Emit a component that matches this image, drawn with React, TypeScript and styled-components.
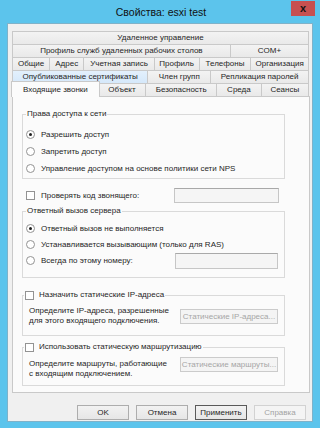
import * as React from 'react';
import styled, { createGlobalStyle } from 'styled-components';

const GlobalStyle = createGlobalStyle`
  html, body {
    margin: 0;
    padding: 0;
  }
  body {
    width: 320px;
    height: 428px;
    overflow: hidden;
    font-family: 'Liberation Sans', Arial, sans-serif;
    color: #262626;
  }
`;

const Frame = styled.div`
  width: 320px;
  height: 428px;
  box-sizing: border-box;
  background: #5cc4ec;
  display: flex;
  flex-direction: column;
  padding: 0 7px 6px 7px;
`;

const TitleBar = styled.div`
  height: 23px;
  flex-shrink: 0;
  display: grid;
  grid-template-columns: 1fr auto 1fr;
  align-items: start;
  margin-right: -2px;
`;

const Title = styled.div`
  font-size: 10.5px;
  line-height: 24px;
  color: #111;
`;

const CloseButton = styled.div`
  justify-self: end;
  width: 24px;
  height: 15px;
  margin-top: 1px;
  background: #c75050;
  color: #141414;
  font-weight: bold;
  font-size: 11px;
  line-height: 14px;
  text-align: center;
`;

const Client = styled.div`
  flex: 1;
  background: #f0f0f0;
  border: 1px solid #7fb2c9;
  padding: 7px 3px 0 4px;
  display: flex;
  flex-direction: column;
  font-size: 8px;
`;

const TabStrip = styled.div`
  display: flex;
  flex-direction: column;
`;

const TabRow = styled.div`
  display: flex;
  align-items: flex-start;
  height: 13px;
`;

type TabState = 'hot' | 'active';

const Tab = styled.div<{ $w: number; $state?: TabState }>`
  flex: ${(p) => p.$w} 1 0px;
  min-width: 0;
  box-sizing: border-box;
  height: 13px;
  border: 1px solid #c9c9c9;
  border-bottom: none;
  background: ${(p) =>
    p.$state === 'hot' ? 'linear-gradient(#e3f0fc, #d5e8fa)' : 'linear-gradient(#f3f3f3, #e9e9e9)'};
  line-height: 12px;
  text-align: center;
  white-space: nowrap;
  overflow: hidden;

  & + & {
    margin-left: -1px;
  }

  ${(p) =>
    p.$state === 'active' &&
    `
    position: relative;
    z-index: 1;
    height: 16px;
    margin: -2px -1px -1px -1px;
    background: #fbfbfb;
    line-height: 15px;
  `}
`;

const Panel = styled.div`
  height: 297px;
  box-sizing: border-box;
  border: 1px solid #c9c9c9;
  margin-right: -1px;
  background: #fbfbfb;
  padding: 6px 24px 0 9px;
  display: flex;
  flex-direction: column;
`;

const Group = styled.fieldset<{ $mt: number; $pad: string }>`
  margin: ${(p) => p.$mt}px 0 0 0;
  padding: ${(p) => p.$pad};
  min-inline-size: 0;
  border: 1px solid #dadada;
  display: flex;
  flex-direction: column;
`;

const Legend = styled.legend`
  margin-left: 3px;
  padding: 0 1px;
  line-height: 10px;
  display: flex;
  align-items: center;
  gap: 5px;

  &.check {
    margin-left: 1px;
  }
`;

const OptionRow = styled.div<{ $h: number }>`
  height: ${(p) => p.$h}px;
  display: flex;
  align-items: center;
  padding-left: 3px;
  white-space: nowrap;
`;

const Radio = styled.span<{ $checked?: boolean }>`
  width: 7px;
  height: 7px;
  box-sizing: content-box;
  border: 1px solid #939393;
  border-radius: 50%;
  background: #fff;
  margin-right: 6px;
  position: relative;
  flex-shrink: 0;

  &::after {
    content: '';
    display: ${(p) => (p.$checked ? 'block' : 'none')};
    position: absolute;
    inset: 2px;
    border-radius: 50%;
    background: #1e1e1e;
  }
`;

const Check = styled.span`
  width: 7px;
  height: 7px;
  border: 1px solid #939393;
  background: #fff;
  flex-shrink: 0;
`;

const CheckRow = styled.div`
  margin-top: 9px;
  height: 15px;
  display: flex;
  align-items: center;
  padding-left: 4px;
  gap: 6px;
`;

const TextBox = styled.div<{ $w: number; $h: number; $mr: number }>`
  margin-left: auto;
  margin-right: ${(p) => p.$mr}px;
  width: ${(p) => p.$w}px;
  height: ${(p) => p.$h}px;
  box-sizing: border-box;
  border: 1px solid #c6c6c6;
  border-top-color: #a9a9a9;
  background: #f5f5f5;
`;

const DescRow = styled.div<{ $align: 'center' | 'flex-start' }>`
  display: flex;
  align-items: ${(p) => p.$align};
  padding-left: 6px;
`;

const Desc = styled.div<{ $pt: number }>`
  line-height: 10px;
  padding-top: ${(p) => p.$pt}px;
  white-space: nowrap;
`;

const DisabledButton = styled.div`
  margin-left: auto;
  margin-right: 6px;
  width: 98px;
  height: 15px;
  box-sizing: border-box;
  border: 1px solid #cbcbcb;
  background: #f4f4f4;
  color: #a6a6a6;
  line-height: 13px;
  text-align: center;
  white-space: nowrap;
`;

const ButtonBar = styled.div`
  margin-top: 12px;
  padding-right: 3px;
  display: flex;
  justify-content: flex-end;
  gap: 7px;
`;

const DialogButton = styled.div<{ $variant?: 'focus' | 'disabled' }>`
  width: 52px;
  height: 15px;
  box-sizing: border-box;
  border: 1px solid
    ${(p) => (p.$variant === 'focus' ? '#5a5a5a' : p.$variant === 'disabled' ? '#d2d2d2' : '#adadad')};
  background: ${(p) => (p.$variant === 'disabled' ? '#f4f4f4' : 'linear-gradient(#f2f2f2, #e6e6e6)')};
  color: ${(p) => (p.$variant === 'disabled' ? '#a3a3a3' : '#262626')};
  line-height: 13px;
  text-align: center;
`;

const tabRows: { label: string; w: number; state?: TabState }[][] = [
  [{ label: 'Удаленное управление', w: 297 }],
  [
    { label: 'Профиль служб удаленных рабочих столов', w: 219 },
    { label: 'COM+', w: 78 },
  ],
  [
    { label: 'Общие', w: 37 },
    { label: 'Адрес', w: 34 },
    { label: 'Учетная запись', w: 71 },
    { label: 'Профиль', w: 45 },
    { label: 'Телефоны', w: 52 },
    { label: 'Организация', w: 58 },
  ],
  [
    { label: 'Опубликованные сертификаты', w: 136, state: 'hot' },
    { label: 'Член групп', w: 63 },
    { label: 'Репликация паролей', w: 98 },
  ],
  [
    { label: 'Входящие звонки', w: 88, state: 'active' },
    { label: 'Объект', w: 47 },
    { label: 'Безопасность', w: 71 },
    { label: 'Среда', w: 44 },
    { label: 'Сеансы', w: 47 },
  ],
];

export default function App(): React.JSX.Element {
  return (
    <>
      <GlobalStyle />
      <Frame>
        <TitleBar>
          <span />
          <Title>Свойства: esxi test</Title>
          <CloseButton>x</CloseButton>
        </TitleBar>
        <Client>
          <TabStrip>
            {tabRows.map((row, i) => (
              <TabRow key={i}>
                {row.map((t) => (
                  <Tab key={t.label} $w={t.w} $state={t.state}>
                    {t.label}
                  </Tab>
                ))}
              </TabRow>
            ))}
          </TabStrip>

          <Panel>
            <Group $mt={6} $pad="7px 0 1px">
              <Legend>Права доступа к сети</Legend>
              <OptionRow $h={17}>
                <Radio $checked />
                Разрешить доступ
              </OptionRow>
              <OptionRow $h={17}>
                <Radio />
                Запретить доступ
              </OptionRow>
              <OptionRow $h={17}>
                <Radio />
                Управление доступом на основе политики сети NPS
              </OptionRow>
            </Group>

            <CheckRow>
              <Check />
              Проверять код звонящего:
              <TextBox $w={105} $h={15} $mr={6} />
            </CheckRow>

            <Group $mt={3} $pad="4px 0 8px">
              <Legend>Ответный вызов сервера</Legend>
              <OptionRow $h={16}>
                <Radio $checked />
                Ответный вызов не выполняется
              </OptionRow>
              <OptionRow $h={16}>
                <Radio />
                Устанавливается вызывающим (только для RAS)
              </OptionRow>
              <OptionRow $h={17}>
                <Radio />
                Всегда по этому номеру:
                <TextBox $w={103} $h={16} $mr={6} />
              </OptionRow>
            </Group>

            <Group $mt={12} $pad="6px 0 9px">
              <Legend className="check">
                <Check />
                Назначить статические IP-адреса
              </Legend>
              <DescRow $align="center">
                <Desc $pt={0}>
                  Определите IP-адреса, разрешенные
                  <br />
                  для этого входящего подключения.
                </Desc>
                <DisabledButton>Статические IP-адреса...</DisabledButton>
              </DescRow>
            </Group>

            <Group $mt={6} $pad="5px 0 6px">
              <Legend className="check">
                <Check />
                Использовать статическую маршрутизацию
              </Legend>
              <DescRow $align="flex-start">
                <Desc $pt={2}>
                  Определите маршруты, работающие
                  <br />с входящим подключением.
                </Desc>
                <DisabledButton>Статические маршруты...</DisabledButton>
              </DescRow>
            </Group>
          </Panel>

          <ButtonBar>
            <DialogButton>OK</DialogButton>
            <DialogButton>Отмена</DialogButton>
            <DialogButton $variant="focus">Применить</DialogButton>
            <DialogButton $variant="disabled">Справка</DialogButton>
          </ButtonBar>
        </Client>
      </Frame>
    </>
  );
}
